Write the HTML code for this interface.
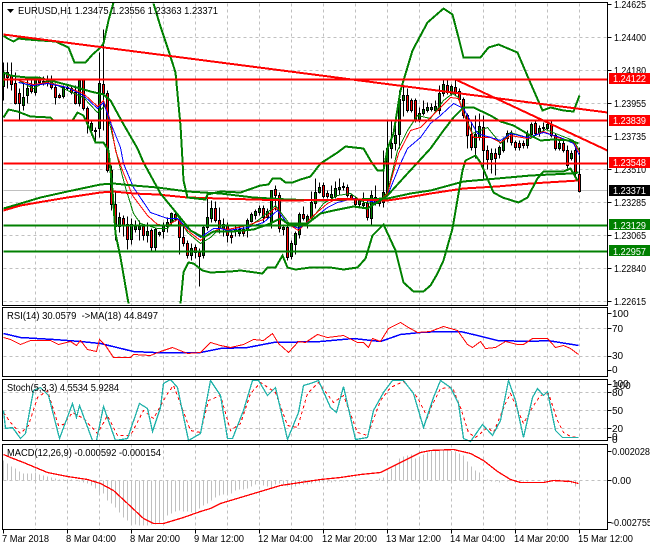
<!DOCTYPE html>
<html><head><meta charset="utf-8"><style>
html,body{margin:0;padding:0;background:#fff;width:650px;height:550px;overflow:hidden}
svg{display:block}
text{font-family:"Liberation Sans",sans-serif;font-size:10px;fill:#000}
.w{fill:#fff}
</style></head><body>
<svg width="650" height="550" viewBox="0 0 650 550" xmlns="http://www.w3.org/2000/svg">
<rect width="650" height="550" fill="#fff"/>
<g transform="translate(.5,.5)" fill="none" shape-rendering="crispEdges">
<!-- grid -->
<path stroke="#c0c0c0" stroke-dasharray="3 3" d="M3 37H607M3 70H607M3 103H607M3 136H607M3 169H607M3 202H607M3 235H607M3 268H607M3 301H607M3 328H607M3 356H607M3 392H607M3 410H607M3 428H607M3 480H607
M35 3V305M67 3V305M99 3V305M131 3V305M163 3V305M195 3V305M227 3V305M259 3V305M291 3V305M323 3V305M355 3V305M387 3V305M419 3V305M451 3V305M483 3V305M515 3V305M547 3V305M579 3V305
M35 307V376M67 307V376M99 307V376M131 307V376M163 307V376M195 307V376M227 307V376M259 307V376M291 307V376M323 307V376M355 307V376M387 307V376M419 307V376M451 307V376M483 307V376M515 307V376M547 307V376M579 307V376
M35 379V440M67 379V440M99 379V440M131 379V440M163 379V440M195 379V440M227 379V440M259 379V440M291 379V440M323 379V440M355 379V440M387 379V440M419 379V440M451 379V440M483 379V440M515 379V440M547 379V440M579 379V440
M35 444V529M67 444V529M99 444V529M131 444V529M163 444V529M195 444V529M227 444V529M259 444V529M291 444V529M323 444V529M355 444V529M387 444V529M419 444V529M451 444V529M483 444V529M515 444V529M547 444V529M579 444V529"/>
<path stroke="#c0c0c0" d="M3 190H607"/>
<!-- MACD histogram -->
<path stroke="#c0c0c0" d="M3 480V460M7 480V463M11 480V466M15 480V468M19 480V471M23 480V473M27 480V473M31 480V473M35 480V472M39 480V474M43 480V475M47 480V476M51 480V477M55 480V478M59 480V479M63 480V479M67 480V479M71 480V479M79 480V481M83 480V482M87 480V483M91 480V485M95 480V488M99 480V492M103 480V493M107 480V500M111 480V503M115 480V507M119 480V512M123 480V517M127 480V520M131 480V523M135 480V524M139 480V525M143 480V525M147 480V525M151 480V524M155 480V524M159 480V523M163 480V520M167 480V515M171 480V513M175 480V511M179 480V510M183 480V511M187 480V511M191 480V512M195 480V510M199 480V508M203 480V505M207 480V503M211 480V500M215 480V497M219 480V495M223 480V494M227 480V494M231 480V493M235 480V490M239 480V489M243 480V489M247 480V488M251 480V486M255 480V484M259 480V484M263 480V485M267 480V486M271 480V487M275 480V484M279 480V483M283 480V484M287 480V486M291 480V487M295 480V486M299 480V484M303 480V484M307 480V484M311 480V483M315 480V482M319 480V482M323 480V482M327 480V482M331 480V482M335 480V481M339 480V481M343 480V481M347 480V481M379 480V478M383 480V477M387 480V472M391 480V468M395 480V464M399 480V458M403 480V456M407 480V455M411 480V454M415 480V458M419 480V457M423 480V454M427 480V452M431 480V450M435 480V449M439 480V449M443 480V449M447 480V449M451 480V450M455 480V451M459 480V453M463 480V455M467 480V461M471 480V466M475 480V470M479 480V472M483 480V479M487 480V479M491 480V481M495 480V481M499 480V482M507 480V481M515 480V482M519 480V481M523 480V481M527 480V481M547 480V479M555 480V479M559 480V479M563 480V481M567 480V482M571 480V483M575 480V486M579 480V488"/>
<!-- wicks -->
<path stroke="#000" d="M3 62V100M7 62V88M11 62V90M15 72V104M19 88V120M23 83V110M27 78V103M31 80V93M35 76V95M39 76V84M43 76V85M47 75V86M51 75V89M55 83V104M59 93V98M63 85V98M67 85V90M71 86V94M75 85V104M79 78V106M83 78V110M87 106V133M91 120V135M95 127V140M99 52V137M103 29V130M107 90V172M111 165V210M115 190V240M119 212V232M123 215V236M127 216V249M131 218V244M135 220V232M139 220V240M143 224V240M147 222V242M151 228V252M155 227V250M159 231V236M163 222V238M167 217V232M171 212V224M175 210V221M179 215V254M183 226V246M187 240V258M191 243V260M195 244V258M199 248V286M203 225V258M207 194V230M211 200V222M215 201V222M219 207V233M223 218V236M227 222V242M231 229V243M235 226V236M239 227V236M243 224V236M247 218V237M251 212V222M255 209V219M259 205V215M263 205V222M267 208V219M271 190V228M275 185V210M279 192V232M283 225V235M287 225V260M291 240V259M295 231V254M299 212V238M303 206V220M307 214V228M311 191V220M315 178V208M319 182V193M323 182V198M327 190V198M331 185V199M335 181V198M339 178V194M343 182V190M347 184V197M351 193V200M355 196V206M359 198V206M363 192V207M367 200V220M371 190V224M375 185V205M379 198V206M383 150V207M387 119V193M391 119V158M395 120V150M399 90V148M403 86V116M407 88V112M411 98V112M415 98V122M419 107V122M423 100V115M427 102V112M431 103V111M435 100V112M439 85V114M443 80V96M447 80V94M451 84V95M455 79V95M459 88V101M463 97V118M467 113V148M471 123V150M475 115V158M479 113V140M483 115V178M487 145V169M491 148V173M495 148V175M499 145V158M503 137V152M507 130V142M511 130V145M515 140V150M519 140V150M523 140V148M527 130V148M531 122V136M535 121V135M539 125V136M543 122V130M547 120V130M551 120V137M555 133V150M559 140V150M563 140V152M567 145V168M571 150V160M575 145V175M579 147V192"/>
<!-- green bodies -->
<path stroke="#000" fill="#008000" d="M2 72h2v14h-2zM22 97h2v8h-2zM26 88h2v7h-2zM34 79h2v13h-2zM42 81h2v2h-2zM46 79h2v4h-2zM62 87h2v9h-2zM78 80h2v23h-2zM90 123h2v7h-2zM94 130h2v1h-2zM98 83h2v45h-2zM118 217h2v9h-2zM130 224h2v15h-2zM134 226h2v3h-2zM138 226h2v3h-2zM146 231h2v4h-2zM154 229h2v18h-2zM158 232h2v2h-2zM162 225h2v6h-2zM166 222h2v4h-2zM170 213h2v9h-2zM190 248h2v7h-2zM202 227h2v28h-2zM206 217h2v10h-2zM210 208h2v10h-2zM222 224h2v4h-2zM234 229h2v2h-2zM238 229h2v4h-2zM246 220h2v10h-2zM250 214h2v7h-2zM254 211h2v4h-2zM258 208h2v4h-2zM266 211h2v6h-2zM270 190h2v32h-2zM282 227h2v2h-2zM290 243h2v13h-2zM294 233h2v11h-2zM298 214h2v20h-2zM306 216h2v5h-2zM310 202h2v16h-2zM314 192h2v11h-2zM318 187h2v5h-2zM330 194h2v3h-2zM334 188h2v8h-2zM338 187h2v2h-2zM342 186h2v1h-2zM358 200h2v4h-2zM362 203h2v2h-2zM370 195h2v23h-2zM382 192h2v10h-2zM386 148h2v44h-2zM390 143h2v5h-2zM394 135h2v8h-2zM398 99h2v35h-2zM402 95h2v5h-2zM418 113h2v6h-2zM422 109h2v4h-2zM426 107h2v3h-2zM430 107h2v2h-2zM434 106h2v4h-2zM438 93h2v17h-2zM442 84h2v9h-2zM450 86h2v7h-2zM474 134h2v13h-2zM478 126h2v11h-2zM490 153h2v6h-2zM498 147h2v7h-2zM502 140h2v10h-2zM506 133h2v5h-2zM526 134h2v11h-2zM530 124h2v10h-2zM538 128h2v5h-2zM542 127h2v1h-2zM546 124h2v4h-2zM558 143h2v5h-2zM570 153h2v5h-2z"/>
<!-- red bodies -->
<path stroke="#000" fill="#f00" d="M6 72h2v5h-2zM10 75h2v9h-2zM14 83h2v20h-2zM18 93h2v10h-2zM30 85h2v6h-2zM38 79h2v3h-2zM50 80h2v7h-2zM54 87h2v10h-2zM58 95h2v2h-2zM66 87h2v1h-2zM70 88h2v4h-2zM74 92h2v11h-2zM82 79h2v29h-2zM86 108h2v15h-2zM102 84h2v9h-2zM106 93h2v77h-2zM110 170h2v34h-2zM114 204h2v22h-2zM122 218h2v7h-2zM126 224h2v15h-2zM142 226h2v9h-2zM150 230h2v17h-2zM174 214h2v5h-2zM178 219h2v18h-2zM182 237h2v6h-2zM186 243h2v12h-2zM194 247h2v5h-2zM198 252h2v4h-2zM214 208h2v12h-2zM218 220h2v8h-2zM226 225h2v10h-2zM230 235h2v2h-2zM242 229h2v4h-2zM262 208h2v9h-2zM274 189h2v6h-2zM278 195h2v33h-2zM286 227h2v30h-2zM302 214h2v4h-2zM322 185h2v11h-2zM326 193h2v3h-2zM346 187h2v8h-2zM350 195h2v3h-2zM354 198h2v6h-2zM366 203h2v14h-2zM374 197h2v6h-2zM378 201h2v2h-2zM406 95h2v15h-2zM410 100h2v10h-2zM414 100h2v20h-2zM446 85h2v7h-2zM454 87h2v6h-2zM458 91h2v8h-2zM462 99h2v16h-2zM466 115h2v20h-2zM470 134h2v13h-2zM482 127h2v23h-2zM486 150h2v9h-2zM494 153h2v5h-2zM510 133h2v9h-2zM514 142h2v5h-2zM518 143h2v4h-2zM522 143h2v2h-2zM534 123h2v10h-2zM550 124h2v11h-2zM554 135h2v13h-2zM562 143h2v7h-2zM566 150h2v15h-2zM574 150h2v23h-2zM578 174h2v17h-2z"/>
<!-- thin MAs -->
<polyline stroke="#008000" points="18,80 33,88 47,80 67,90 83,97 97,112 105,105 112,135 117,157 125,187 133,213 140,223 157,228 167,228 177,215 187,232 200,243 210,237 220,227 227,230 247,227 260,218 275,205 288,222 298,228 310,220 323,203 337,195 350,193 363,202 377,203 387,192 397,150 407,130 417,115 430,118 443,100 452,93 458,97 463,112 472,133 487,127 500,143 510,132 530,138 545,129 560,135 573,140 579,150"/>
<polyline stroke="#f00" points="18,80 33,84 47,82 67,87 83,93 97,106 103,100 110,120 115,150 122,170 132,195 147,215 157,224 167,225 177,219 187,230 200,240 210,232 220,228 227,229 247,225 263,219 275,207 287,223 298,230 313,215 327,203 337,198 353,198 377,202 387,193 398,153 410,130 420,127 437,110 450,97 458,98 463,113 473,137 490,137 500,142 510,135 527,138 543,131 557,137 573,142 579,152"/>
<polyline stroke="#00f" points="18,82 33,85 47,83 67,87 83,95 97,108 103,102 110,122 120,147 123,163 133,187 150,212 167,218 177,218 187,228 200,237 213,228 220,228 227,230 247,227 263,222 277,210 287,223 298,228 313,218 327,207 337,202 353,198 377,202 387,195 400,163 407,148 420,137 430,123 440,115 453,103 463,108 477,133 500,140 510,133 527,137 543,132 560,137 573,143 579,155"/>
<!-- long MAs -->
<polyline stroke="#008000" stroke-width="2" points="3,208 20,203 40,197 67,191 100,184 113,183 133,185 157,187 187,191 220,193 253,197 287,199 320,200 353,199 387,198 410,193 430,190 463,181 497,178 530,175 570,173 578,172"/>
<polyline stroke="#f00" stroke-width="2" points="3,210 20,205 43,201 67,197 100,192 113,191 133,193 157,194 187,197 220,198 253,199 287,200 353,199 387,200 407,197 430,193 463,188 497,186 530,183 578,180"/>
<!-- Bollinger -->
<polyline stroke="#008000" stroke-width="2" points="3,35 7,38 13,41 18,38 27,39 40,40 55,41 68,47 74,62 85,62 92,54 100,47 103,43 108,20 113,2 M"/>
<polyline stroke="#008000" stroke-width="2" points="153,3 160,26 168,50 175,72 180,125 182,160 183,180 187,197 205,199 207,194 220,191 240,192 260,185 268,184 272,178 280,178 285,182 292,182 300,179 310,176 320,163 337,152 345,146 363,148 370,160 377,170 383,170 387,148 393,133 400,90 412,50 427,22 443,8 452,14 458,37 463,57 480,57 488,47 498,44 517,52 528,78 542,110 550,107 563,110 573,111 579,95"/>
<polyline stroke="#008000" stroke-width="2" points="3,72 10,75 17,76 27,77 37,77 50,80 73,86 90,91 103,94 110,100 122,122 137,148 143,162 160,193 178,215 190,230 203,237 213,231 233,231 253,229 270,223 280,218 287,223 307,223 320,213 333,210 353,206 367,208 387,195 407,173 430,148 443,130 453,117 463,107 473,107 490,115 500,121 513,125 530,135 540,140 553,139 570,140 578,143"/>
<polyline stroke="#008000" stroke-width="2" points="3,117 8,109 17,111 30,116 50,117 53,120 72,120 77,112 83,115 90,130 95,142 103,142 108,150 112,190 115,233 120,257 128,303"/>
<polyline stroke="#008000" stroke-width="2" points="180,303 183,272 188,262 193,263 202,270 210,272 230,271 240,270 262,273 267,267 275,267 282,255 287,267 295,269 310,267 330,267 343,269 357,267 365,258 372,235 383,224 395,250 403,282 413,291 423,291 430,285 437,273 443,260 452,228 462,170 465,160 475,155 480,162 493,192 502,197 518,202 527,197 537,178 543,171 563,171 570,168 577,180"/>
<!-- levels and trendlines -->
<path stroke="#f00" stroke-width="2" d="M3 79H607M3 120H607M3 163H607"/>
<path stroke="#008000" stroke-width="2" d="M3 225H607M3 251H607"/>
<path stroke="#f00" stroke-width="2" d="M3 34L607 112M455 79L607 150"/>
<!-- RSI -->
<polyline stroke="#00f" stroke-width="1.5" points="3,333 20,337 53,339 80,341 100,343 133,351 153,352 200,352 220,348 247,347 273,342 320,341 353,338 380,341 400,334 420,332 440,331 460,331 477,335 497,340 530,341 547,340 578,345"/>
<polyline stroke="#f00" points="3,337 10,339 20,344 30,340 50,340 58,344 70,341 76,345 80,340 87,349 96,351 99,339 105,345 113,357 130,357 133,354 150,355 160,351 172,347 187,353 200,352 210,342 220,345 230,347 243,344 253,339 263,340 272,333 278,343 288,352 298,341 305,342 317,334 327,337 343,335 357,342 363,342 368,347 372,338 380,341 388,328 400,322 408,327 417,332 430,331 443,326 457,330 467,344 472,347 480,341 485,348 495,347 505,341 517,344 523,344 532,338 547,338 555,347 563,345 570,348 578,354"/>
<!-- Stoch -->
<polyline stroke="#f00" stroke-dasharray="3 3" points="3,412 10,422 20,433 28,425 37,397 47,390 58,425 63,424 72,412 83,418 97,433 107,415 117,435 130,435 143,410 153,418 167,393 173,385 190,430 200,432 208,400 220,395 230,430 240,423 250,393 260,382 275,392 287,425 297,427 307,393 318,382 333,402 343,395 357,432 367,435 380,400 390,387 403,381 417,397 427,417 430,408 440,388 452,387 460,407 468,432 475,437 487,427 493,432 505,403 510,393 523,423 533,405 540,395 548,393 557,420 563,432 570,436 578,437"/>
<polyline stroke="#20b2aa" stroke-width="1.3" points="3,410 5,428 12,427 20,438 25,433 33,390 40,387 48,395 59,438 72,403 76,417 79,405 92,440 96,440 103,406 115,440 127,438 139,403 147,408 152,431 160,407 163,383 170,379 177,387 188,440 200,433 210,380 220,395 227,438 232,438 243,410 252,380 258,380 267,395 275,387 287,439 298,412 303,385 310,383 318,380 330,407 336,412 343,386 355,439 367,437 373,410 383,392 392,380 403,380 413,393 423,427 433,397 440,380 450,387 458,403 463,438 470,441 482,424 492,435 500,420 508,380 515,400 523,437 532,397 537,388 543,395 547,391 555,430 562,437 578,437"/>
<!-- MACD signal -->
<polyline stroke="#f00" stroke-width="1.3" points="3,454 10,457 23,462 47,472 67,476 87,479 100,483 113,490 127,503 143,518 153,523 163,523 183,517 200,511 210,508 220,503 240,497 260,491 280,485 300,482 320,479 340,477 360,474 380,472 400,462 420,452 430,450 453,449 470,453 483,460 497,471 510,479 520,482 543,482 553,480 570,481 578,483"/>
<!-- frames -->
<path stroke="#000" d="M2 2H607V305H2ZM2 307H607V376H2ZM2 379H607V440H2ZM2 444H607V529H2Z"/>
<path stroke="#000" d="M607 4h4M607 37h4M607 70h4M607 103h4M607 136h4M607 169h4M607 202h4M607 235h4M607 268h4M607 301h4M607 313h4M607 328h4M607 356h4M607 370h4M607 384h4M607 392h4M607 410h4M607 428h4M607 437h4M607 451h4M607 480h4M607 522h4M3 529v4M67 529v4M131 529v4M195 529v4M259 529v4M323 529v4M387 529v4M451 529v4M515 529v4M579 529v4"/>
</g>
<!-- price boxes -->
<rect x="609" y="73" width="41" height="11" fill="#f00"/>
<rect x="609" y="115" width="41" height="11" fill="#f00"/>
<rect x="609" y="157" width="41" height="11" fill="#f00"/>
<rect x="609" y="185" width="41" height="11" fill="#000"/>
<rect x="609" y="219" width="41" height="11" fill="#008000"/>
<rect x="609" y="245" width="41" height="11" fill="#008000"/>
<path d="M7 9h7l-3.5 4z" fill="#000"/>
<text x="18" y="14" textLength="200" lengthAdjust="spacingAndGlyphs">EURUSD,H1  1.23475 1.23556 1.23363 1.23371</text>
<text x="7" y="319" textLength="151" lengthAdjust="spacingAndGlyphs" xml:space="preserve">RSI(14) 30.0579  -&gt;MA(18) 44.8497</text>
<text x="7" y="391" textLength="112" lengthAdjust="spacingAndGlyphs">Stoch(5,3,3) 4.5534 5.9284</text>
<text x="7" y="456" textLength="154" lengthAdjust="spacingAndGlyphs">MACD(12,26,9) -0.000592 -0.000154</text>
<g>
<text x="614" y="8" textLength="32" lengthAdjust="spacingAndGlyphs">1.24625</text>
<text x="614" y="41" textLength="32" lengthAdjust="spacingAndGlyphs">1.24400</text>
<text x="614" y="74" textLength="32" lengthAdjust="spacingAndGlyphs">1.24180</text>
<text x="614" y="107" textLength="32" lengthAdjust="spacingAndGlyphs">1.23955</text>
<text x="614" y="140" textLength="32" lengthAdjust="spacingAndGlyphs">1.23735</text>
<text x="614" y="173" textLength="32" lengthAdjust="spacingAndGlyphs">1.23510</text>
<text x="614" y="206" textLength="32" lengthAdjust="spacingAndGlyphs">1.23285</text>
<text x="614" y="239" textLength="32" lengthAdjust="spacingAndGlyphs">1.23065</text>
<text x="614" y="272" textLength="32" lengthAdjust="spacingAndGlyphs">1.22840</text>
<text x="614" y="305" textLength="32" lengthAdjust="spacingAndGlyphs">1.22615</text>
</g>
<rect x="609" y="73" width="41" height="11" fill="#f00"/>
<rect x="609" y="157" width="41" height="11" fill="#f00"/>
<text class="w" x="613" y="82" textLength="33" lengthAdjust="spacingAndGlyphs">1.24122</text>
<text class="w" x="613" y="124" textLength="33" lengthAdjust="spacingAndGlyphs">1.23839</text>
<text class="w" x="613" y="166" textLength="33" lengthAdjust="spacingAndGlyphs">1.23548</text>
<text class="w" x="613" y="194" textLength="33" lengthAdjust="spacingAndGlyphs">1.23371</text>
<text class="w" x="613" y="229" textLength="33" lengthAdjust="spacingAndGlyphs">1.23129</text>
<text class="w" x="613" y="255" textLength="33" lengthAdjust="spacingAndGlyphs">1.22957</text>
<text x="612" y="317">100</text>
<text x="612" y="332">70</text>
<text x="612" y="359">30</text>
<text x="612" y="373">0</text>
<text x="612" y="387">100</text>
<text x="614" y="389">100</text>
<text x="612" y="396">80</text>
<text x="612" y="414">50</text>
<text x="612" y="432">20</text>
<text x="612" y="440">0</text>
<text x="612" y="443">0</text>
<text x="612" y="455" textLength="38" lengthAdjust="spacingAndGlyphs">0.002028</text>
<text x="612" y="484" textLength="19" lengthAdjust="spacingAndGlyphs">0.00</text>
<text x="611" y="526" textLength="41" lengthAdjust="spacingAndGlyphs">-0.002755</text>
<g>
<text x="2" y="542" textLength="47" lengthAdjust="spacingAndGlyphs">7 Mar 2018</text>
<text x="66" y="542" textLength="50" lengthAdjust="spacingAndGlyphs">8 Mar 04:00</text>
<text x="130" y="542" textLength="50" lengthAdjust="spacingAndGlyphs">8 Mar 20:00</text>
<text x="194" y="542" textLength="50" lengthAdjust="spacingAndGlyphs">9 Mar 12:00</text>
<text x="258" y="542" textLength="55" lengthAdjust="spacingAndGlyphs">12 Mar 04:00</text>
<text x="322" y="542" textLength="55" lengthAdjust="spacingAndGlyphs">12 Mar 20:00</text>
<text x="386" y="542" textLength="55" lengthAdjust="spacingAndGlyphs">13 Mar 12:00</text>
<text x="450" y="542" textLength="55" lengthAdjust="spacingAndGlyphs">14 Mar 04:00</text>
<text x="514" y="542" textLength="55" lengthAdjust="spacingAndGlyphs">14 Mar 20:00</text>
<text x="578" y="542" textLength="55" lengthAdjust="spacingAndGlyphs">15 Mar 12:00</text>
</g>
</svg>
</body></html>
